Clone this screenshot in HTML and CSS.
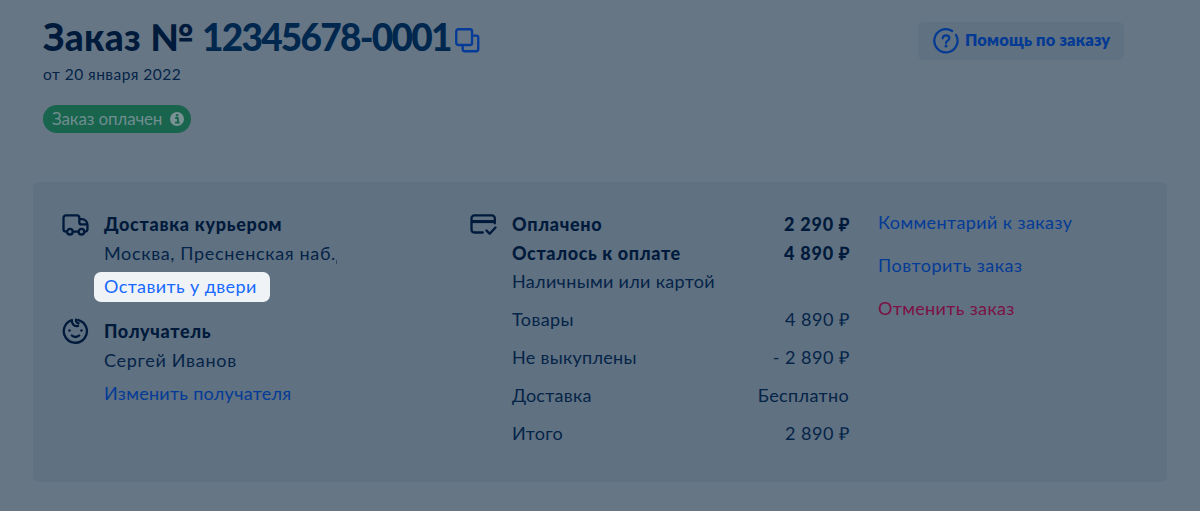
FILE: index.html
```html
<!DOCTYPE html>
<html lang="ru">
<head>
<meta charset="utf-8">
<title>Заказ</title>
<link rel="stylesheet" href="styles.css">
</head>
<body>
<header class="top">
  <div class="order">
    <h1 class="title"><span class="title-word">Заказ №</span><span class="title-num">12345678-0001</span>
      <svg class="copy" width="25" height="25" viewBox="0 0 26 26"><path d="M18.500 8h3.700a2 2 0 0 1 2 2v12.200a2 2 0 0 1-2 2h-12.200a2 2 0 0 1-2-2v-3.700"/><rect x="1.300" y="1.300" width="16.400" height="16.400" rx="2.200"/></svg>
    </h1>
    <p class="date">от 20 января 2022</p>
    <div class="badge"><span class="badge-text">Заказ оплачен</span>
      <svg width="14" height="14" viewBox="0 0 14 14"><circle class="info-bg" cx="7" cy="7" r="7"/><path class="info-i" d="M5.200 6h2.700v4.300M5 10.600h4.800"/><circle class="info-dot" cx="7.100" cy="3.300" r="1.300"/></svg>
    </div>
  </div>
  <div class="help">
    <svg width="26" height="26" viewBox="0 0 26 26"><path d="M19.200 3A11.600 11.600 0 1 0 23 7"/><path d="M9.700 10.300c.1-1.900 1.500-2.900 3.300-2.900s3.300 1 3.300 2.800c0 2.500-3.300 2.300-3.300 4.800"/><circle cx="13" cy="18" r="1.500"/></svg>
    <span class="help-text">Помощь по заказу</span>
  </div>
</header>
<main class="panel">
  <section class="delivery">
    <div class="block">
      <svg class="icon" width="27" height="23" viewBox="0 0 28 24"><path d="M4.500 18.300H4a2.500 2.500 0 0 1-2.500-2.500V4A2.500 2.500 0 0 1 4 1.500h11.500A2.500 2.500 0 0 1 18 4v1.300h2.500a6 6 0 0 1 6 6V16a2.300 2.300 0 0 1-2.300 2.300M11.700 18.300h4.600M18 5.300v3.500a2 2 0 0 0 2 2h6.300"/><circle cx="8.200" cy="18.500" r="2.900"/><circle cx="20.200" cy="18.500" r="2.900"/></svg>
      <div class="lines"><b class="w-courier">Доставка курьером</b><span class="w-city">Москва, Пресненская наб.<i class="cut"></i></span><a class="door"><span class="w-door">Оставить у двери</span></a></div>
    </div>
    <div class="block receiver">
      <svg class="icon" width="27" height="27" viewBox="0 0 28 28"><path d="M10.300 2.200A12 12 0 1 0 17 2.100M10.300 2.200c-.5 3.900 2.300 7 6.300 6M14.600 1.800c-.3 2 .6 3.400 2.600 3.700"/><path d="M10.200 18.200c2 2 5.600 2 7.600 0"/><circle class="eye" cx="7.800" cy="13" r="1.300"/><circle class="eye" cx="20.200" cy="13" r="1.300"/></svg>
      <div class="lines"><b class="w-recv">Получатель</b><span class="w-name">Сергей Иванов</span><a class="link change w-change">Изменить получателя</a></div>
    </div>
  </section>
  <section class="payment">
    <svg class="icon" width="27" height="23" viewBox="0 0 28 24"><path d="M13.300 19.300H4.500a3 3 0 0 1-3-3V4.500a3 3 0 0 1 3-3h18.300a3 3 0 0 1 3 3v5.200"/><path class="stripe" d="M1.500 7.900h24.300"/><path d="M17.200 17.300l3.300 3.300 6-6.500"/></svg>
    <div class="sums">
      <div class="row"><b class="w-paid">Оплачено</b><b class="w-sum1">2 290 ₽</b></div>
      <div class="row"><b class="w-left">Осталось к оплате</b><b class="w-sum1">4 890 ₽</b></div>
      <div class="row"><span class="w-cash">Наличными или картой</span></div>
      <div class="row gap"><span class="w-goods">Товары</span><span class="w-sum2">4 890 ₽</span></div>
      <div class="row gap"><span class="w-unsold">Не выкуплены</span><span class="w-sum2">- 2 890 ₽</span></div>
      <div class="row gap"><span class="w-ship">Доставка</span><span class="w-free">Бесплатно</span></div>
      <div class="row gap"><span class="w-total">Итого</span><span class="w-sum2">2 890 ₽</span></div>
    </div>
  </section>
  <nav class="actions">
    <a class="link w-comment">Комментарий к заказу</a>
    <a class="link w-repeat">Повторить заказ</a>
    <a class="cancel w-cancel">Отменить заказ</a>
  </nav>
</main>
</body>
</html>
```
FILE: styles.css
```css
* { box-sizing: border-box; }
body {
  margin: 0;
  height: 511px;
  padding: 0 33px;
  overflow: hidden;
  background: #677685;
  color: #052448;
  font: 18px/28.5px Lato, "Open Sans", sans-serif;
}
svg { flex: none; fill: none; stroke-linecap: round; stroke-linejoin: round; }
b { font-weight: 900; color: #001a3b; }
.top { display: flex; justify-content: space-between; height: 182px; padding: 16px 43px 0 10px; }
.title { display: flex; margin: 0; height: 41px; font-size: 37px; line-height: 41px; font-weight: 900; color: #001a3b; white-space: nowrap; }
.title-word { width: 159px; letter-spacing: .3px; }
.title-num { width: 253px; letter-spacing: -1.750px; color: #00274d; }
.copy { margin-top: 12px; stroke: #043a98; stroke-width: 2.400; }
.date { margin: 6px 0 0; font-size: 15.500px; line-height: 22px; letter-spacing: .47px; }
.badge { display: flex; align-items: center; justify-content: space-between; width: 148px; height: 28px; margin-top: 20px; padding: 0 7px 0 9px; border-radius: 14px; background: #19644d; color: #708d90; font-size: 17px; letter-spacing: -.15px; white-space: nowrap; }
.info-bg { fill: #7b9294; }
.info-i { stroke: #19644d; stroke-width: 1.900; stroke-linecap: butt; }
.info-dot { fill: #19644d; }
.help { display: flex; align-items: center; gap: 6px; width: 206px; height: 38px; margin-top: 6px; padding: 0 0 1px 15px; border-radius: 6px; background: #607181; color: #043a93; font-size: 16.500px; font-weight: 800; letter-spacing: .15px; white-space: nowrap; }
.help svg { stroke: #043a93; stroke-width: 2.200; }
.help circle { fill: #043a93; stroke: none; }
.panel { display: flex; height: 300px; padding: 28px 28px 0 29px; border-radius: 6px; background: #607181; white-space: nowrap; }
.delivery { width: 408px; }
.block { display: flex; gap: 15px; }
.icon { stroke: #001a3b; stroke-width: 2.400; margin-top: 4px; }
.lines { display: flex; flex-direction: column; align-items: flex-start; }
.cut { display: inline-block; width: 1px; height: 4px; background: #30475f; vertical-align: -4px; }
.door { width: 176px; height: 30px; margin: 5px 0 0 -10px; padding-left: 10px; border-radius: 7px; background: #f0f3f6; color: #1769ff; line-height: 29px; }
.receiver { margin-top: 15px; }
.receiver .icon { margin-top: 1px; }
.eye { fill: #001a3b; stroke: none; }
.link { color: #043b96; }
.change { margin-top: 5px; }
.payment { display: flex; gap: 15px; width: 408px; }
.payment .stripe { stroke-width: 3.200; stroke-linecap: butt; }
.sums { width: 337px; }
.row { display: flex; justify-content: space-between; }
.gap { margin-top: 9.500px; }
.actions { display: flex; flex-direction: column; gap: 14.300px; margin-top: -2px; }
.cancel { color: #7c1145; }

/* Tracking of the individual labels */
.w-courier, .w-paid { letter-spacing: .7px; }
.w-city { letter-spacing: .65px; }
.w-door, .w-goods, .w-comment { letter-spacing: .4px; }
.w-recv, .w-left { letter-spacing: .62px; }
.w-name { letter-spacing: .7px; }
.w-change, .w-unsold, .w-ship, .w-total { letter-spacing: .28px; }
.w-sum1 { letter-spacing: .8px; margin-right: -.8px; }
.w-sum2 { letter-spacing: .5px; margin-right: -.5px; }
.w-cash { letter-spacing: .32px; }
.w-free, .w-cancel { letter-spacing: .35px; }
.w-repeat { letter-spacing: .5px; }
```
